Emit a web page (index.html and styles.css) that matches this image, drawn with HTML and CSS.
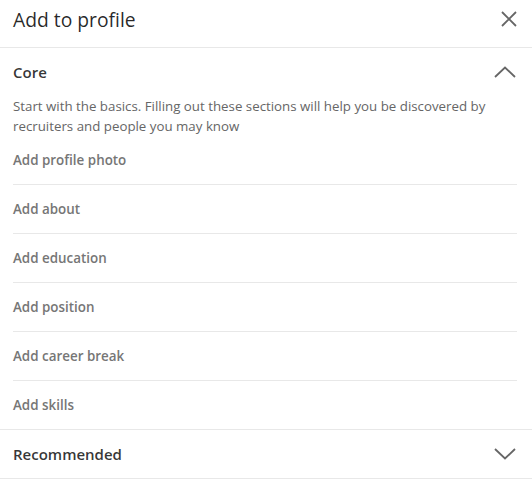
FILE: index.html
```html
<!DOCTYPE html>
<html lang="en">
<head>
  <meta charset="UTF-8" />
  <title>Add to profile</title>
  <link rel="stylesheet" href="styles.css">
</head>
<body>
  <div class="modal">
    <div class="modal-header">
      <h2>Add to profile</h2>
      <button class="icon-btn" aria-label="Dismiss">
        <svg width="16" height="16" viewBox="0 0 16 16"><path d="M1 1 L15 15 M15 1 L1 15" stroke="#666" stroke-width="1.8" fill="none"/></svg>
      </button>
    </div>

    <div class="section">
      <div class="section-head">
        <span class="section-title">Core</span>
        <svg class="chevron" width="22" height="12" viewBox="0 0 22 12"><path d="M1 11 L11 1.5 L21 11" stroke="#666" stroke-width="1.8" fill="none"/></svg>
      </div>
      <p class="section-desc">Start with the basics. Filling out these sections will help you be discovered by recruiters and people you may know</p>
      <ul class="items">
        <li>Add profile photo</li>
        <li>Add about</li>
        <li>Add education</li>
        <li>Add position</li>
        <li>Add career break</li>
        <li>Add skills</li>
      </ul>
    </div>

    <div class="section">
      <div class="section-head">
        <span class="section-title">Recommended</span>
        <svg class="chevron" width="22" height="12" viewBox="0 0 22 12"><path d="M1 1 L11 10.5 L21 1" stroke="#666" stroke-width="1.8" fill="none"/></svg>
      </div>
    </div>
  </div>
</body>
</html>
```

FILE: styles.css
```css
body {
  margin: 0;
  font-family: 'Open Sans', 'Noto Sans', sans-serif;
  background: #fff;
  color: rgba(0, 0, 0, 0.9);
}
.modal {
  width: 532px;
}
.modal-header {
  display: flex;
  align-items: center;
  justify-content: space-between;
  height: 38px;
  padding: 0 15px 9px 13px;
  border-bottom: 1px solid #e8e8e8;
}
.modal-header h2 {
  margin: 0;
  font-size: 19.3px;
  font-weight: 400;
  color: rgba(0, 0, 0, 0.85);
}
.icon-btn {
  background: none;
  border: none;
  padding: 0;
  width: 16px;
  height: 16px;
  display: flex;
  cursor: pointer;
}
.section {
  border-bottom: 1px solid #e8e8e8;
}
.section-head {
  display: flex;
  align-items: center;
  justify-content: space-between;
  height: 48px;
  padding: 0 16px 0 13px;
}
.section-title {
  font-size: 15px;
  font-weight: 600;
  color: rgba(0, 0, 0, 0.8);
}
.section-desc {
  margin: 0;
  padding: 0 15px 0 13px;
  font-size: 13.3px;
  line-height: 20px;
  color: #666;
}
.items {
  list-style: none;
  margin: 0 15px 0 13px;
  padding: 0;
}
.items li {
  height: 48px;
  display: flex;
  align-items: center;
  font-size: 13.4px;
  font-weight: 600;
  color: #767676;
}
.items li + li {
  border-top: 1px solid #e8e8e8;
}
```
